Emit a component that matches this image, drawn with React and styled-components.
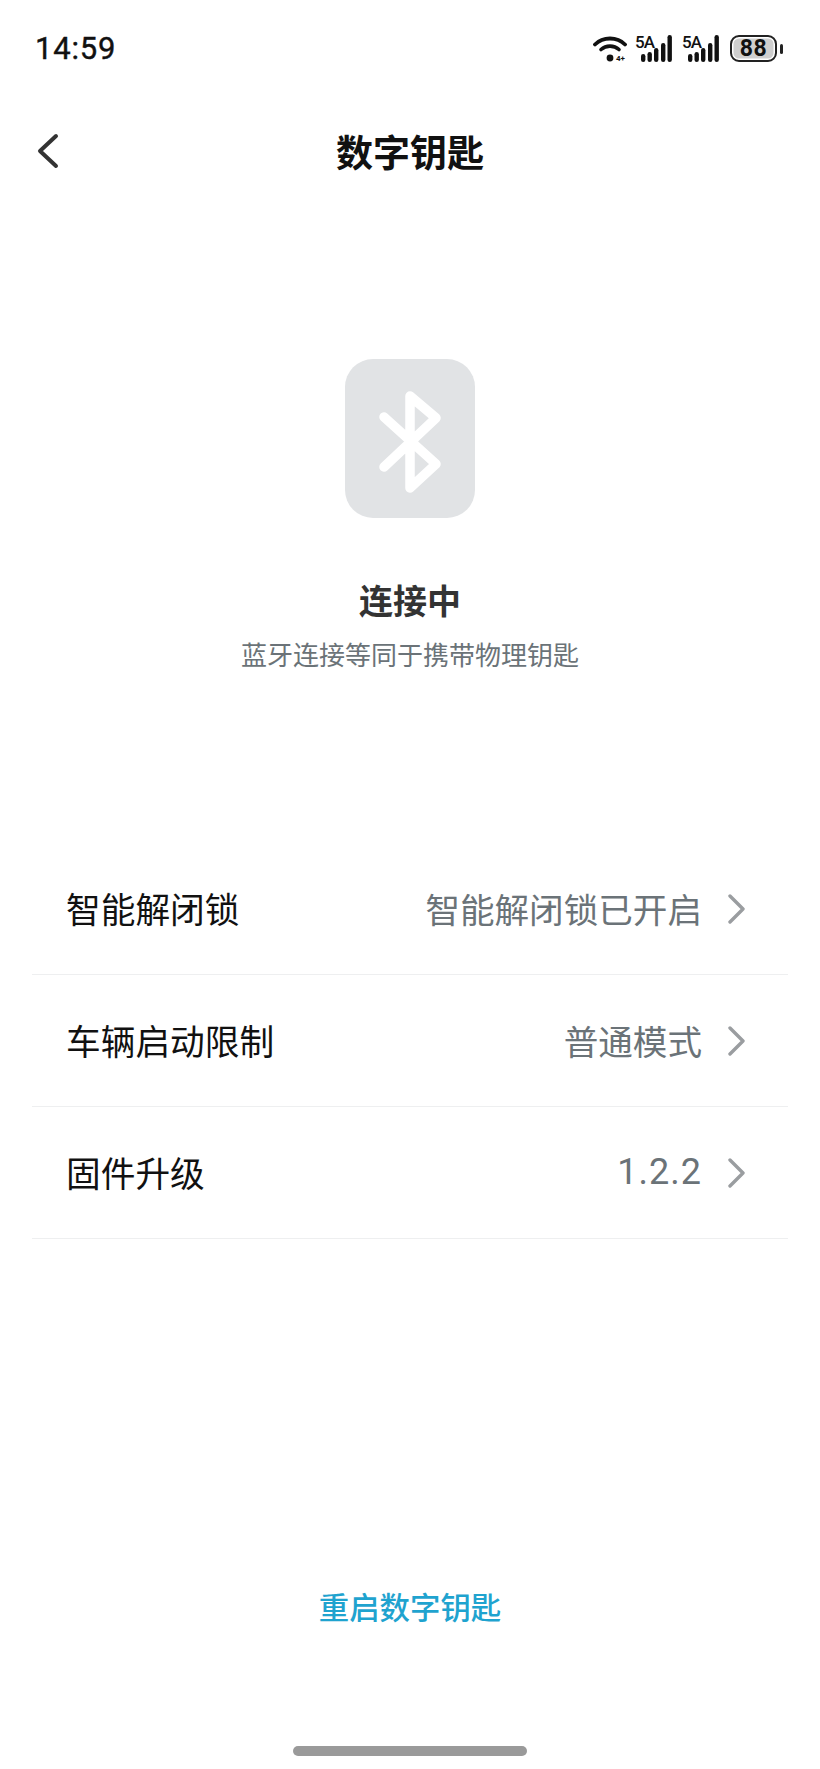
import React from 'react';
import styled, { createGlobalStyle } from 'styled-components';

const Global = createGlobalStyle`
  html, body { margin: 0; padding: 0; background: #fff; }
  body { font-family: "Noto Sans CJK SC", "Noto Sans", sans-serif; }
`;

const Screen = styled.div`
  width: 820px;
  height: 1769px;
  overflow: hidden;
  background: #fff;
  display: flex;
  flex-direction: column;
`;

const StatusBar = styled.div`
  height: 97px;
  flex: none;
  padding: 0 37px 0 35px;
  box-sizing: border-box;
  display: flex;
  align-items: center;
  justify-content: space-between;
`;

const Clock = styled.span`
  font-family: Roboto, sans-serif;
  font-size: 31px;
  font-weight: 400;
  letter-spacing: 0.8px;
  color: #111;
  -webkit-text-stroke: 0.4px #111;
`;

const StatusIcons = styled.div`
  display: flex;
  align-items: center;
`;

const WifiSlot = styled.div`
  display: flex;
  margin-right: 8px;
`;

const SignalWrap = styled.div`
  position: relative;
  width: 37px;
  height: 27px;
  margin-right: ${(p) => p.$gap}px;
`;

const SignalTag = styled.span`
  position: absolute;
  left: 0;
  top: -1px;
  font-family: Roboto, sans-serif;
  font-size: 17px;
  line-height: 17px;
  font-weight: 500;
  letter-spacing: -1px;
  color: #111;
`;

const BatteryRow = styled.div`
  display: flex;
  align-items: center;
  gap: 3px;
`;

const BatteryBody = styled.div`
  width: 47px;
  height: 27px;
  box-sizing: border-box;
  border: 2.5px solid #222;
  border-radius: 9px;
  background: #cfcfcf;
  box-shadow: inset 0 0 0 1.5px #fff;
  display: flex;
  align-items: center;
  justify-content: center;
  font-family: Roboto, sans-serif;
  font-size: 23px;
  font-weight: 700;
  letter-spacing: 0.5px;
  color: #111;
`;

const BatteryCap = styled.div`
  width: 3px;
  height: 10px;
  border-radius: 2px;
  background: #222;
`;

const NavBar = styled.header`
  height: 107px;
  flex: none;
  position: relative;
  display: flex;
  align-items: center;
  justify-content: center;
`;

const BackButton = styled.div`
  position: absolute;
  left: 37px;
  top: 35px;
  display: flex;
`;

const Title = styled.h1`
  margin: 0;
  font-size: 37px;
  font-weight: 700;
  color: #111;
`;

const StatusBlock = styled.section`
  flex: none;
  padding-top: 155px;
  display: flex;
  flex-direction: column;
  align-items: center;
`;

const IconCard = styled.div`
  width: 130px;
  height: 159px;
  border-radius: 28px;
  background: #e1e3e5;
  display: flex;
  align-items: center;
  justify-content: center;
`;

const BluetoothSlot = styled.div`
  display: flex;
  margin-top: 7px;
`;

const StateLabel = styled.div`
  margin-top: 58px;
  font-size: 34px;
  line-height: 48px;
  font-weight: 700;
  color: #333;
`;

const StateHint = styled.div`
  margin-top: 11px;
  font-size: 26px;
  line-height: 38px;
  color: #6b7378;
`;

const SettingsList = styled.div`
  flex: none;
  margin: 170px 32px 0;
`;

const Row = styled.div`
  height: 132px;
  box-sizing: border-box;
  padding: 0 42px 2px 34px;
  border-bottom: 1px solid #eeeff0;
  display: flex;
  align-items: center;
  justify-content: space-between;
`;

const RowLabel = styled.span`
  font-size: 34.7px;
  color: #111;
`;

const RowValue = styled.span`
  display: flex;
  align-items: center;
  gap: 26px;
  font-size: 34.6px;
  color: #6b7378;
`;

const ChevronSlot = styled.span`
  display: flex;
  margin-top: 2px;
`;

const VersionText = styled.span`
  font-family: Roboto, sans-serif;
  font-size: 36px;
  letter-spacing: 1px;
`;

const Footer = styled.div`
  flex: 1;
  position: relative;
  display: flex;
  justify-content: center;
`;

const RestartLink = styled.div`
  margin-top: 345px;
  font-size: 30.4px;
  line-height: 44px;
  height: 44px;
  font-weight: 500;
  color: #1fa3cf;
`;

const HomeBar = styled.div`
  position: absolute;
  left: 293px;
  bottom: 13px;
  width: 234px;
  height: 10px;
  border-radius: 5px;
  background: #9a9a9a;
`;

const Chevron = () => (
  <svg width="18" height="30" viewBox="0 0 18 30" fill="none">
    <path d="M2 2l13 13L2 28" stroke="#9a9da0" strokeWidth="3.4" strokeLinecap="round" strokeLinejoin="round" />
  </svg>
);

const BackIcon = () => (
  <svg width="22" height="38" viewBox="0 0 22 38" fill="none">
    <path d="M19 4L3 19l16 15" stroke="#333" strokeWidth="4" strokeLinecap="round" strokeLinejoin="round" />
  </svg>
);

const BluetoothIcon = () => (
  <svg width="64" height="106" viewBox="0 0 64 106" fill="none">
    <path d="M6 28l52 47-26 24V7l26 22L6 78" stroke="#fff" strokeWidth="9.500" strokeLinecap="round" strokeLinejoin="round" />
  </svg>
);

const WifiIcon = () => (
  <svg width="34" height="27" viewBox="0 0 34 27" fill="none">
    <path d="M2 9.500C10 1.500 24 1.500 32 9.500" stroke="#111" strokeWidth="3.800" strokeLinecap="round" />
    <path d="M8 14.500C13 10 21 10 26 14.500" stroke="#111" strokeWidth="3.600" strokeLinecap="round" />
    <circle cx="17" cy="23" r="3.400" fill="#111" />
    <text x="23" y="26" fontFamily="Roboto, sans-serif" fontSize="8" fontWeight="700" fill="#111">4+</text>
  </svg>
);

const SignalBars = () => (
  <svg width="37" height="27" viewBox="0 0 37 27">
    {[[6, 19, 8], [12.500, 17, 10], [19, 13, 14], [26, 8, 19], [32.500, 0, 27]].map(([x, y, h]) => (
      <rect key={x} x={x} y={y} width="4.400" height={h} rx="2.200" fill="#111" />
    ))}
  </svg>
);

const Signal = ({ gap }) => (
  <SignalWrap $gap={gap}>
    <SignalBars />
    <SignalTag>5A</SignalTag>
  </SignalWrap>
);

const settings = [
  { label: '智能解闭锁', value: '智能解闭锁已开启' },
  { label: '车辆启动限制', value: '普通模式' },
  { label: '固件升级', value: <VersionText>1.2.2</VersionText> },
];

export default function App() {
  return (
    <Screen>
      <Global />
      <StatusBar>
        <Clock>14:59</Clock>
        <StatusIcons>
          <WifiSlot><WifiIcon /></WifiSlot>
          <Signal gap={10} />
          <Signal gap={11} />
          <BatteryRow>
            <BatteryBody>88</BatteryBody>
            <BatteryCap />
          </BatteryRow>
        </StatusIcons>
      </StatusBar>
      <NavBar>
        <BackButton><BackIcon /></BackButton>
        <Title>数字钥匙</Title>
      </NavBar>
      <StatusBlock>
        <IconCard>
          <BluetoothSlot><BluetoothIcon /></BluetoothSlot>
        </IconCard>
        <StateLabel>连接中</StateLabel>
        <StateHint>蓝牙连接等同于携带物理钥匙</StateHint>
      </StatusBlock>
      <SettingsList>
        {settings.map((item) => (
          <Row key={item.label}>
            <RowLabel>{item.label}</RowLabel>
            <RowValue>
              {item.value}
              <ChevronSlot><Chevron /></ChevronSlot>
            </RowValue>
          </Row>
        ))}
      </SettingsList>
      <Footer>
        <RestartLink>重启数字钥匙</RestartLink>
        <HomeBar />
      </Footer>
    </Screen>
  );
}
